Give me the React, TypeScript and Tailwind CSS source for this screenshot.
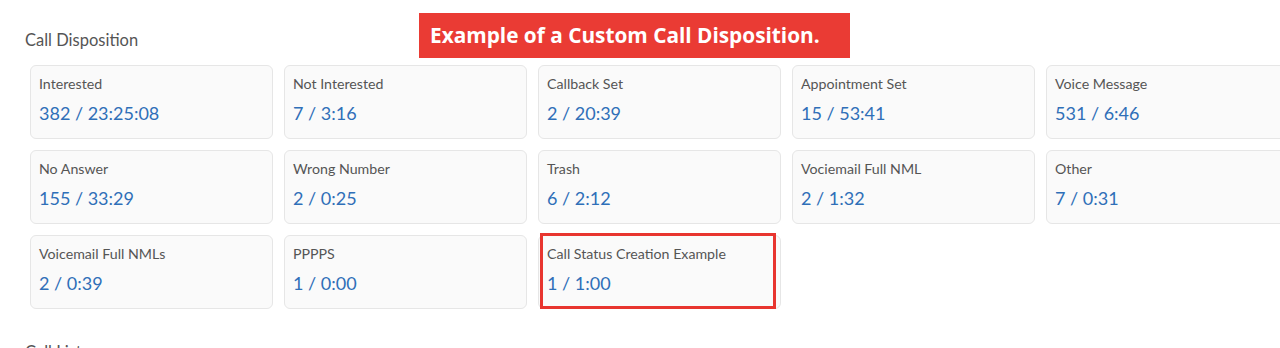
const rows = [
  [
    { label: "Interested", value: "382 / 23:25:08" },
    { label: "Not Interested", value: "7 / 3:16" },
    { label: "Callback Set", value: "2 / 20:39" },
    { label: "Appointment Set", value: "15 / 53:41" },
    { label: "Voice Message", value: "531 / 6:46" },
  ],
  [
    { label: "No Answer", value: "155 / 33:29" },
    { label: "Wrong Number", value: "2 / 0:25" },
    { label: "Trash", value: "6 / 2:12" },
    { label: "Vociemail Full NML", value: "2 / 1:32" },
    { label: "Other", value: "7 / 0:31" },
  ],
  [
    { label: "Voicemail Full NMLs", value: "2 / 0:39" },
    { label: "PPPPS", value: "1 / 0:00" },
    { label: "Call Status Creation Example", value: "1 / 1:00", marked: true },
  ],
];

type Item = { label: string; value: string; marked?: boolean };

const Card = ({ item }: { item: Item }) => (
  <div className="relative h-[74px] rounded-md border border-[#e6e6e6] bg-[#fafafa] pl-[8px] pt-[9px]">
    <div className="text-[14.2px] leading-[18px] text-[#555]">{item.label}</div>
    <div className="mt-[8px] text-[18px] leading-[24px] text-[#2f6fb8]">{item.value}</div>
    {item.marked && (
      <div className="absolute left-[1px] right-[4px] top-[-3px] bottom-[-1px] border-[3px] border-[#e8352f]" />
    )}
  </div>
);

export default function App() {
  return (
    <div
      className="relative h-[348px] w-[1280px] overflow-hidden bg-white"
      style={{ fontFamily: "Lato, 'Noto Sans', sans-serif" }}
    >
      <div className="pl-[25px] pt-[30px] text-[16.5px] leading-[20px] text-[#555]">Call Disposition</div>
      <div className="mt-[15px] flex flex-col gap-[11px] pl-[30px]">
        {rows.map((row, i) => (
          <div key={i} className="grid grid-cols-[repeat(5,243px)] gap-[11px]">
            {row.map((item) => (
              <Card key={item.label} item={item} />
            ))}
          </div>
        ))}
      </div>
      <div className="pl-[25px] pt-[33px] text-[16.5px] leading-[20px] text-[#555]">Call Lists</div>

      <div
        className="absolute left-[419px] top-[13px] flex h-[45px] w-[431px] items-center bg-[#ea3b34] pl-[11px] text-[20.8px] font-bold text-white"
        style={{ fontFamily: "'Open Sans', 'Noto Sans', sans-serif" }}
      >
        Example of a Custom Call Disposition.
      </div>
    </div>
  );
}
